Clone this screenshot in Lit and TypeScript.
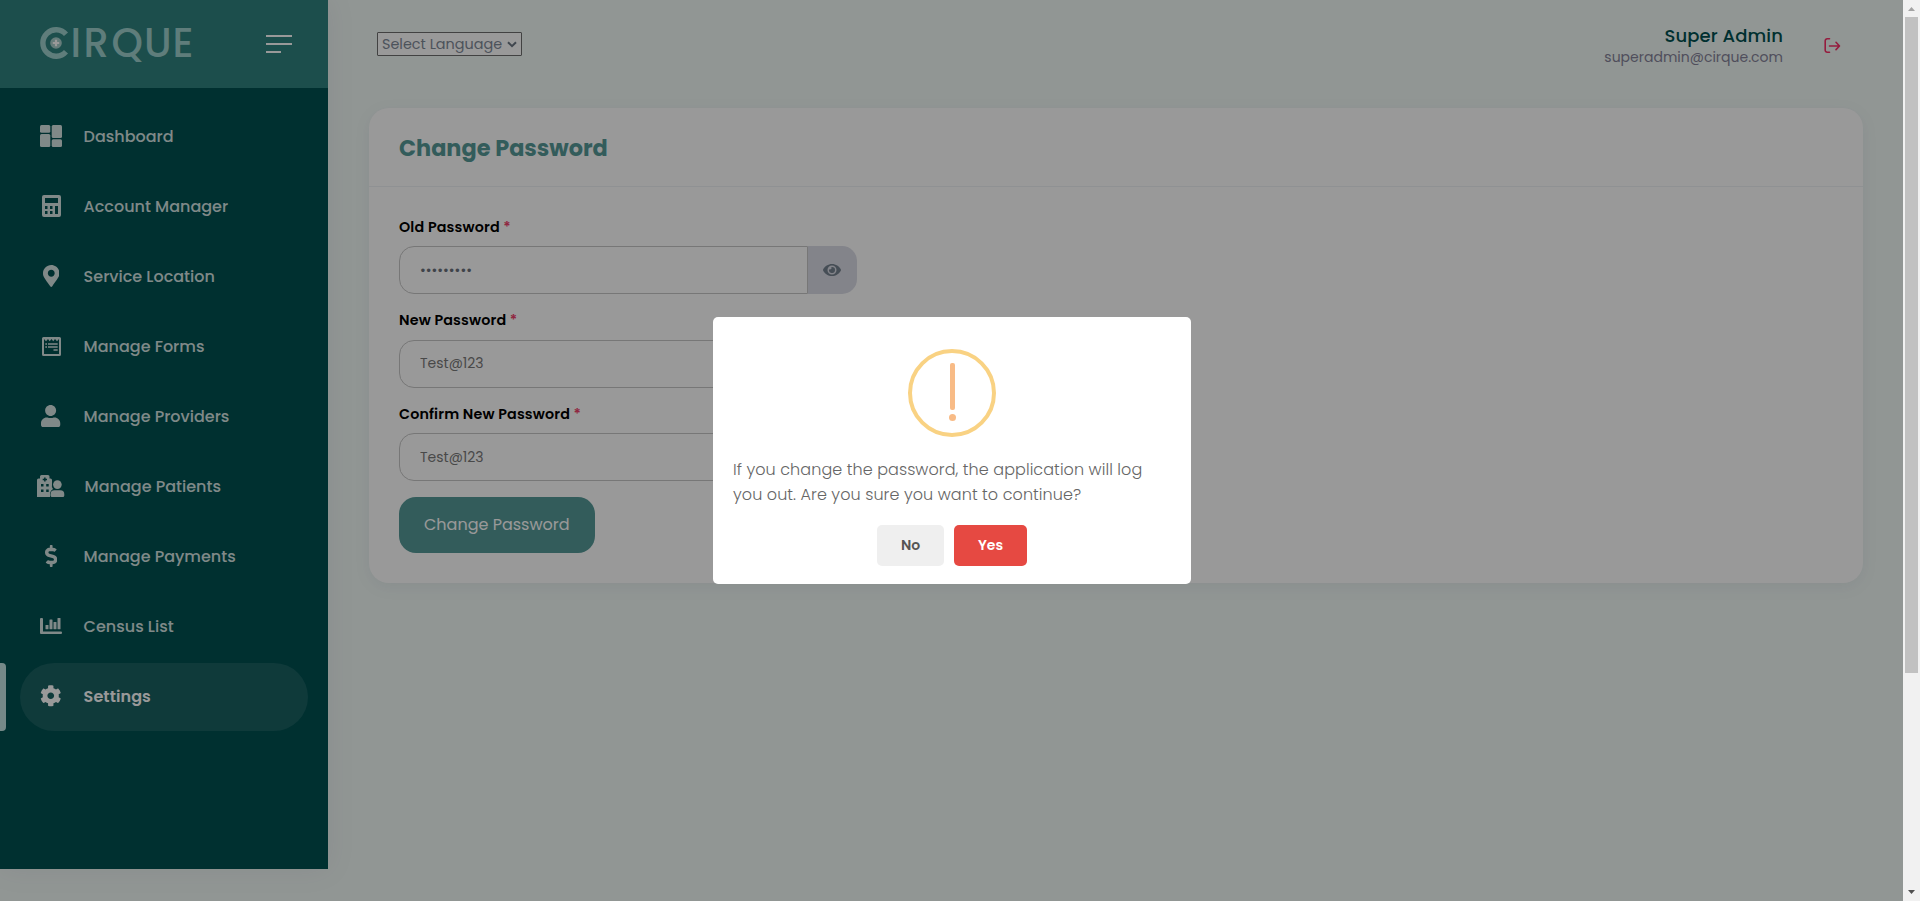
import { LitElement, html, css, svg } from "lit";
import { customElement, property } from "lit/decorators.js";
import { classMap } from "lit/directives/class-map.js";

const glyphs = {
  dashboard: svg`<svg width="22" height="22" viewBox="0 0 22 22"><rect width="10.300" height="7.700" rx="1.500"/><rect y="9" width="10.300" height="13" rx="1.500"/><rect x="11.700" width="10.300" height="13" rx="1.500"/><rect x="11.700" y="14.300" width="10.300" height="7.700" rx="1.500"/></svg>`,
  calculator: svg`<svg width="19" height="22" viewBox="0 0 19 22"><path fill-rule="evenodd" d="M2 0h15a2 2 0 0 1 2 2v18a2 2 0 0 1-2 2H2a2 2 0 0 1-2-2V2a2 2 0 0 1 2-2zM3 3v5h13V3zM3 11v3h2.500v-3zM8 11v3h2.500v-3zM13 11v8h3v-8zM3 16v3h2.500v-3zM8 16v3h2.500v-3z"/></svg>`,
  pin: svg`<svg width="16.500" height="22" viewBox="0 0 384 512"><path d="M172.268 501.67C26.97 291.031 0 269.413 0 192 0 85.961 85.961 0 192 0s192 85.961 192 192c0 77.413-26.97 99.031-172.268 309.67-9.535 13.774-29.93 13.773-39.464 0zM192 272c44.183 0 80-35.817 80-80s-35.817-80-80-80-80 35.817-80 80 35.817 80 80 80z"/></svg>`,
  form: svg`<svg width="19" height="19" viewBox="0 0 19 19"><path fill-rule="evenodd" d="M1.500 0h16A1.500 1.500 0 0 1 19 1.500v16a1.500 1.500 0 0 1-1.500 1.500h-16A1.500 1.500 0 0 1 0 17.500v-16A1.500 1.500 0 0 1 1.500 0zM2 2v15h15V2l-2 2.200L13 2l-1.800 2.200L9.500 2 7.700 4.200 6 2 4 4.200z"/><path d="M3.300 6.200h1.700v1.600H3.300zM6 6.200h9.700v1.600H6zM3.300 9.200h1.700v1.600H3.300zM6 9.200h9.700v1.600H6zM11.500 12.200h4.200v1.600h-4.200z"/></svg>`,
  user: svg`<svg width="19.250" height="22" viewBox="0 0 448 512"><path d="M224 256c70.7 0 128-57.3 128-128S294.7 0 224 0 96 57.3 96 128s57.3 128 128 128zm89.6 32h-16.7c-22.2 10.2-46.9 16-72.9 16s-50.6-5.8-72.9-16h-16.7C60.2 288 0 348.2 0 422.4V464c0 26.5 21.5 48 48 48h352c26.5 0 48-21.5 48-48v-41.6c0-74.2-60.2-134.4-134.4-134.4z"/></svg>`,
  hospital: svg`<svg width="28" height="22" viewBox="0 0 28 22"><path fill-rule="evenodd" d="M4.500 0h6.500A1.500 1.500 0 0 1 12.500 1.500V3.500h1A1.500 1.500 0 0 1 15 5v4A6 6 0 0 0 16 14a6 6 0 0 0-3 4v4H0V5a1.500 1.500 0 0 1 1.500-1.500h1.500v-2A1.500 1.500 0 0 1 4.500 0zM7.100 2.400v1.400H5.700v1.400h1.400v1.400h1.500V5.200h1.400V3.800H8.600V2.400zM4 9v2.500h2.500V9zM9.200 9v2.500h2.500V9zM4 14.500v2.500h2.500V14.500zM9.200 14.500v2.500h2.500V14.500z"/><circle cx="20.400" cy="9.600" r="4.300"/><path d="M17.500 15.200h5.800a4 4 0 0 1 4 4v1.300a1.500 1.500 0 0 1-1.500 1.500h-10.800a1.500 1.500 0 0 1-1.500-1.500v-1.300a4 4 0 0 1 4-4z"/></svg>`,
  dollar: svg`<svg width="12.400" height="22" viewBox="0 0 288 512"><path d="M209.2 233.4l-108-31.6C88.7 198.2 80 186.5 80 173.5c0-16.3 13.2-29.5 29.5-29.5h66.3c12.2 0 24.2 3.7 34.2 10.5 6.100 4.100 14.300 3.100 19.500-2l34.800-34c7.100-6.900 6.100-18.400-1.800-24.500C238 74.800 207.400 64.100 176 64V16c0-8.800-7.200-16-16-16h-32c-8.800 0-16 7.200-16 16v48h-2.500C45.800 64-5.400 118.700.5 183.600c4.200 46.100 39.400 83.600 83.800 96.600l102.500 30c12.500 3.700 21.200 15.300 21.200 28.300 0 16.300-13.200 29.500-29.500 29.500h-66.300C100 368 88 364.300 78 357.500c-6.100-4.100-14.300-3.100-19.500 2l-34.800 34c-7.100 6.900-6.100 18.400 1.800 24.500 24.500 19.200 55.100 29.900 86.500 30v48c0 8.800 7.200 16 16 16h32c8.800 0 16-7.200 16-16v-48.200c46.600-.9 90.300-28.600 105.700-72.700 21.500-61.600-14.600-124.800-72.500-141.700z"/></svg>`,
  chart: svg`<svg width="22" height="16" viewBox="0 0 22 16"><path d="M1 0h1a1 1 0 0 1 1 1v12.500h18a1 1 0 0 1 1 1v.5a1 1 0 0 1-1 1H1a1 1 0 0 1-1-1V1a1 1 0 0 1 1-1z"/><rect x="5.500" y="7" width="3" height="4.200" rx=".5"/><rect x="9.500" y="1.500" width="3" height="9.700" rx=".5"/><rect x="13.500" y="4" width="3" height="7.200" rx=".5"/><rect x="17.500" y="0" width="3" height="11.200" rx=".5"/></svg>`,
  gear: svg`<svg width="21.500" height="21.500" viewBox="0 0 512 512"><path d="M487.4 315.7l-42.600-24.600c4.300-23.200 4.300-47 0-70.200l42.600-24.600c4.900-2.800 7.100-8.600 5.500-14-11.100-35.600-30-67.800-54.700-94.600-3.800-4.100-10-5.100-14.800-2.300L380.800 110c-17.900-15.400-38.500-27.300-60.800-35.100V25.800c0-5.600-3.900-10.500-9.400-11.700-36.700-8.200-74.300-7.800-109.200 0-5.500 1.200-9.400 6.100-9.400 11.700V75c-22.200 7.900-42.800 19.800-60.800 35.100L88.700 85.500c-4.900-2.800-11-1.900-14.800 2.300-24.700 26.700-43.600 58.900-54.700 94.600-1.700 5.400.6 11.200 5.500 14L67.300 221c-4.300 23.200-4.300 47 0 70.200l-42.600 24.600c-4.900 2.800-7.100 8.600-5.500 14 11.100 35.600 30 67.800 54.700 94.600 3.800 4.100 10 5.100 14.800 2.300l42.600-24.600c17.900 15.400 38.500 27.300 60.800 35.100v49.200c0 5.600 3.900 10.500 9.400 11.700 36.700 8.200 74.300 7.800 109.200 0 5.500-1.200 9.400-6.100 9.400-11.700v-49.200c22.200-7.900 42.800-19.800 60.800-35.100l42.600 24.600c4.900 2.800 11 1.900 14.800-2.300 24.700-26.700 43.600-58.900 54.700-94.600 1.500-5.500-.7-11.300-5.600-14.100zM256 336c-44.100 0-80-35.900-80-80s35.900-80 80-80 80 35.900 80 80-35.900 80-80 80z"/></svg>`,
};

const menu: { label: string; icon: keyof typeof glyphs; active?: boolean }[] = [
  { label: "Dashboard", icon: "dashboard" },
  { label: "Account Manager", icon: "calculator" },
  { label: "Service Location", icon: "pin" },
  { label: "Manage Forms", icon: "form" },
  { label: "Manage Providers", icon: "user" },
  { label: "Manage Patients", icon: "hospital" },
  { label: "Manage Payments", icon: "dollar" },
  { label: "Census List", icon: "chart" },
  { label: "Settings", icon: "gear", active: true },
];

@customElement("side-bar")
export class SideBar extends LitElement {
  static styles = css`
    :host { display: flex; flex-direction: column; width: 328px; height: 869px; background: #005050;
      box-shadow: 0 0 28px rgba(82, 63, 105, 0.08); }
    .brand { display: flex; align-items: center; justify-content: space-between; box-sizing: border-box;
      height: 88px; padding: 0 36px 0 39px; background: #2f827f; }
    .logo { display: block; overflow: visible; }
    .logo text { font: 500 40px Poppins, "Open Sans", sans-serif; fill: #9ed0cd; }
    .burger { display: flex; flex-direction: column; gap: 6px; width: 26px; }
    .burger i { height: 2px; background: #fff; }
    .burger i:last-child { width: 15px; }
    nav { display: flex; flex-direction: column; gap: 2px; padding-top: 15px; }
    .row { display: flex; align-items: center; height: 68px; }
    .mark { width: 6px; height: 68px; margin-right: 14px; border-radius: 0 4px 4px 0; }
    .link { display: flex; align-items: center; box-sizing: border-box; width: 288px; height: 68px;
      padding: 0 0 1px 15px; border-radius: 34px; color: #d5e4e3; fill: #d5e4e3; font-size: 16px; font-weight: 500; }
    .icon { display: flex; justify-content: center; width: 32px; margin-right: 16.600px; padding-bottom: 1px; }
    .wide .icon { margin-right: 17.600px; }
    .on .mark { background: #c3e4e3; }
    .on .link { background: #196162; color: #fff; fill: #fff; font-weight: 600; letter-spacing: 0.08px; }
  `;
  render() {
    return html`
      <div class="brand">
        <svg class="logo" width="160" height="60" viewBox="0 0 160 60">
          <path d="M27 20.300A13.200 13.200 0 1 0 27 37.700" fill="none" stroke="#9ed0cd" stroke-width="5.400"/>
          <circle cx="17" cy="29" r="5.800" fill="#a9cfcc"/>
          <path d="M17 25.800v6.400M13.800 29h6.400" stroke="#fff" stroke-width="2.200"/>
          <text x="31.500 44.500 72.500 105 133.500" y="42.500">IRQUE</text>
        </svg>
        <div class="burger"><i></i><i></i><i></i></div>
      </div>
      <nav>
        ${menu.map((m) => html`<div class=${classMap({ row: true, on: !!m.active, wide: m.icon === "hospital" })}>
          <span class="mark"></span>
          <a class="link"><span class="icon">${glyphs[m.icon]}</span>${m.label}</a>
        </div>`)}
      </nav>`;
  }
}

@customElement("password-field")
export class PasswordField extends LitElement {
  @property() label = "";
  @property() value = "";
  @property({ type: Boolean }) masked = false;
  static styles = css`
    :host { display: block; width: 458px; padding-bottom: 16px; }
    .label { display: block; margin-bottom: 8.5px; font-size: 14.3px; font-weight: 600; line-height: 21px; letter-spacing: 0.15px; color: #000; }
    .star { color: #f1416c; }
    .group { display: flex; height: 48px; }
    .box { flex: 1; min-width: 0; box-sizing: border-box; padding: 0 20px; margin: 0; outline: none; background: #fff;
      border: 1px solid #c6c6c6; border-radius: 15px 0 0 15px; font: 400 14px Poppins, "Open Sans", sans-serif; color: #7a7a7a; }
    .masked { color: #69717c; }
    .eye { display: flex; align-items: center; justify-content: center; box-sizing: border-box; width: 49px; padding-right: 1px;
      background: #dadce6; border-radius: 0 15px 15px 0; fill: #76828f; }
  `;
  render() {
    return html`
      <label class="label">${this.label} <span class="star">*</span></label>
      <div class="group">
        <input class=${classMap({ box: true, masked: this.masked })} type=${this.masked ? "password" : "text"} .value=${this.value}>
        <span class="eye"><svg width="18" height="16" viewBox="0 0 576 512"><path d="M572.52 241.4C518.29 135.59 410.93 64 288 64S57.68 135.64 3.48 241.41a32.35 32.35 0 0 0 0 29.19C57.71 376.41 165.07 448 288 448s230.32-71.64 284.52-177.41a32.35 32.35 0 0 0 0-29.19zM288 400a144 144 0 1 1 144-144 143.93 143.93 0 0 1-144 144zm0-240a95.31 95.31 0 0 0-25.31 3.79 47.85 47.85 0 0 1-66.9 66.9A95.78 95.78 0 1 0 288 160z"/></svg></span>
      </div>`;
  }
}

@customElement("confirm-dialog")
export class ConfirmDialog extends LitElement {
  static styles = css`
    :host { display: block; box-sizing: border-box; width: 478px; height: 267px; padding: 32px 19.500px 0 20.500px; border-radius: 5px; background: #fff; }
    .sign { display: flex; flex-direction: column; align-items: center; box-sizing: border-box; width: 88px; height: 88px;
      margin: 0 auto 20px; padding: 10px 0 0 1px; border: 4px solid #f9d283; border-radius: 50%; }
    .stem { width: 5px; height: 47px; border-radius: 2px; background: #f8bb86; }
    .dot { width: 7px; height: 7px; margin-top: 4px; border-radius: 50%; background: #f8bb86; }
    .message { font-size: 16px; font-weight: 300; line-height: 25px; letter-spacing: 0.07px; color: #666; }
    .actions { display: flex; justify-content: center; gap: 10px; margin-top: 18px; }
    .btn { width: 67px; height: 41px; padding: 0; border: 0; border-radius: 5px; font: 600 14px Poppins, "Open Sans", sans-serif; background: #efefef; color: #555; }
    .danger { width: 73px; background: #e64942; color: #fff; }
  `;
  render() {
    return html`
      <div class="sign"><span class="stem"></span><span class="dot"></span></div>
      <div class="message">If you change the password, the application will log you out. Are you sure you want to continue?</div>
      <div class="actions"><button class="btn">No</button><button class="btn danger">Yes</button></div>`;
  }
}

@customElement("app-root")
export class AppRoot extends LitElement {
  static styles = css`
    :host { display: grid; grid-template-columns: 1fr 17px; width: 100%; height: 901px; overflow: hidden;
      font-family: Poppins, "Open Sans", sans-serif; }
    .page { position: relative; display: flex; align-items: flex-start; height: 901px; background: #f2faf7; }
    .main { flex: 1; padding: 0 40px 0 41px; }
    .top { display: flex; align-items: flex-start; height: 108px; }
    .language { display: flex; align-items: center; justify-content: space-between; box-sizing: border-box; width: 145px; height: 24px;
      margin: 32px auto 0 8px; padding: 0 4px; border: 1px solid #6e6e6e; border-radius: 1px; background: #fff; color: #7f8a98; font-size: 14.400px; }
    .who { padding-top: 25px; text-align: right; }
    .name { font-size: 18px; font-weight: 500; line-height: 22px; letter-spacing: 0.1px; color: #005050; }
    .mail { font-size: 14px; line-height: 21px; color: #858399; }
    .exit { margin: 37px 22px 0 40px; }
    .card { border-radius: 20px; background: #fff; box-shadow: 0 4px 16px rgba(76, 87, 125, 0.08); }
    .title { box-sizing: border-box; height: 79px; padding: 1px 30px 0; border-bottom: 1px solid #eff2f5;
      font-size: 22.400px; font-weight: 700; line-height: 79px; color: #559a98; }
    .body { padding: 29.500px 30px 30px; }
    .submit { display: block; height: 56px; padding: 0 25px 1px; border: 0; border-radius: 17px; background: #559a98; color: #fff;
      font: 400 16px Poppins, "Open Sans", sans-serif; }
    .shade { position: absolute; inset: 0; display: flex; align-items: center; justify-content: center; background: rgba(0, 0, 0, 0.4); }
    .scroll { display: flex; flex-direction: column; align-items: center; background: #f1f1f1; }
    .arrow { width: 17px; height: 17px; }
    .thumb { width: 13px; height: 656px; margin-bottom: auto; background: #c1c1c1; }
  `;
  render() {
    return html`
      <div class="page">
        <side-bar></side-bar>
        <div class="main">
          <div class="top">
            <div class="language">Select Language
              <svg width="10" height="7" viewBox="0 0 10 7"><path d="M1 1.200l4 4 4-4" fill="none" stroke="#6b7683" stroke-width="2"/></svg>
            </div>
            <div class="who"><div class="name">Super Admin</div><div class="mail">superadmin@cirque.com</div></div>
            <svg class="exit" width="18" height="17" viewBox="0 0 18 17" fill="none" stroke="#f82f68" stroke-width="1.600" stroke-linecap="round" stroke-linejoin="round"><path d="M6.500 1.800H4.200A2 2 0 0 0 2.200 3.800v9.400a2 2 0 0 0 2 2h2.300M6.500 9h9.800M13 5.300L16.500 9 13 12.600"/></svg>
          </div>
          <section class="card">
            <div class="title">Change Password</div>
            <div class="body">
              <password-field label="Old Password" value="Test@1234" masked></password-field>
              <password-field label="New Password" value="Test@123"></password-field>
              <password-field label="Confirm New Password" value="Test@123"></password-field>
              <button class="submit">Change Password</button>
            </div>
          </section>
        </div>
        <div class="shade"><confirm-dialog></confirm-dialog></div>
      </div>
      <div class="scroll">
        <svg class="arrow" viewBox="0 0 17 17"><path d="M5 11h7L8.500 7z" fill="#a3a3a3"/></svg>
        <div class="thumb"></div>
        <svg class="arrow" viewBox="0 0 17 17"><path d="M5 6h7L8.500 10z" fill="#505050"/></svg>
      </div>`;
  }
}
